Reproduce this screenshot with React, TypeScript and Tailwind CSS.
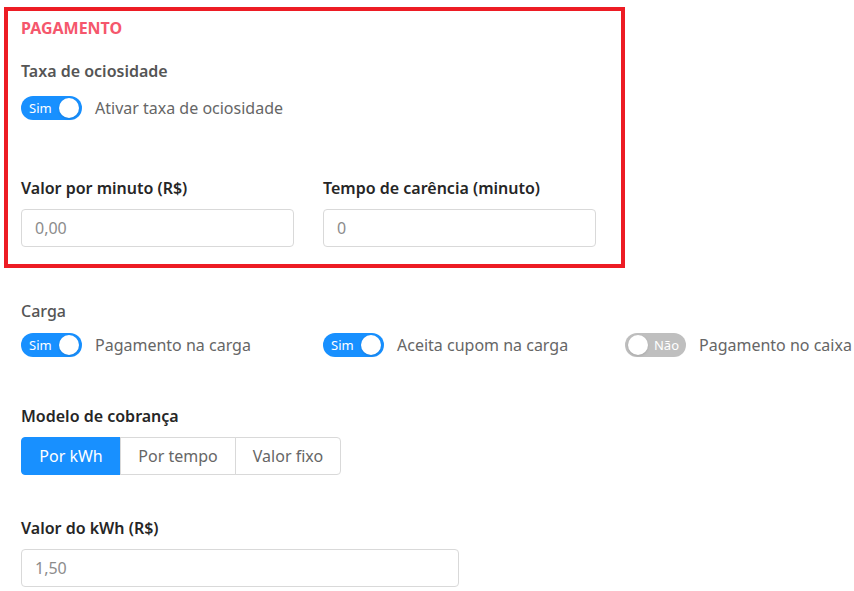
import { useState } from 'react';

const font = { fontFamily: '"Noto Sans", "Open Sans", sans-serif' };

const Toggle = ({ on, label }: { on: boolean; label: string }) => {
	return (
		<div className="flex items-center gap-[13px]">
			<div
				className={`relative flex items-center h-[24px] w-[61px] shrink-0 rounded-full ${on ? 'bg-[#1890ff]' : 'bg-[#bfbfbf]'}`}
			>
				{on ? (
					<>
						<span className="pl-[8px] text-[13px] text-white leading-none">Sim</span>
						<span className="absolute right-[3px] top-[2px] h-[20px] w-[20px] rounded-full bg-white shadow-sm" />
					</>
				) : (
					<>
						<span className="absolute left-[3px] top-[2px] h-[20px] w-[20px] rounded-full bg-white shadow-sm" />
						<span className="ml-auto pr-[7px] text-[13px] text-white leading-none">Não</span>
					</>
				)}
			</div>
			<span className="text-[16px] text-[#666] whitespace-nowrap">{label}</span>
		</div>
	);
};

const Field = ({ label, value }: { label: string; value: string }) => {
	return (
		<div>
			<div className="text-[16px] font-semibold text-[#262626] leading-[22px]">{label}</div>
			<div className="mt-[10px] h-[38px] rounded-[4px] border border-[#d9d9d9] bg-white px-[13px] flex items-center text-[16px] text-[#8c8c8c]">
				{value}
			</div>
		</div>
	);
};

export default function App() {
	const [mode, setMode] = useState('kwh');
	const modes = [
		{ id: 'kwh', name: 'Por kWh', w: 'w-[100px]' },
		{ id: 'tempo', name: 'Por tempo', w: 'w-[116px]' },
		{ id: 'fixo', name: 'Valor fixo', w: 'w-[106px]' },
	];

	return (
		<div className="min-h-screen w-[854px] overflow-hidden bg-white" style={font}>
			<div className="pt-[7px] pl-[4px]">
				<div className="w-[621px] h-[261px] border-[4px] border-[#ed1c24] pl-[13px] pt-[6px]">
					<div className="text-[16px] font-bold text-[#f5576c] leading-[22px]">PAGAMENTO</div>
					<div className="mt-[21px] text-[16px] font-semibold text-[#555] leading-[22px]">Taxa de ociosidade</div>
					<div className="mt-[14px]">
						<Toggle on label="Ativar taxa de ociosidade" />
					</div>
					<div className="mt-[57px] grid grid-cols-[273px_273px] gap-x-[29px]">
						<Field label="Valor por minuto (R$)" value="0,00" />
						<Field label="Tempo de carência (minuto)" value="0" />
					</div>
				</div>
			</div>

			<div className="pl-[21px]">
				<div className="mt-[32px] text-[16px] font-medium text-[#555] leading-[22px]">Carga</div>
				<div className="mt-[11px] grid grid-cols-[273px_273px_auto] gap-x-[29px]">
					<Toggle on label="Pagamento na carga" />
					<Toggle on label="Aceita cupom na carga" />
					<Toggle on={false} label="Pagamento no caixa" />
				</div>

				<div className="mt-[48px] text-[16px] font-semibold text-[#262626] leading-[22px]">Modelo de cobrança</div>
				<div className="mt-[10px] flex">
					{modes.map((m, i) => (
						<button
							key={m.id}
							onClick={() => setMode(m.id)}
							className={`h-[38px] ${m.w} text-[16px] border ${
								mode === m.id
									? 'bg-[#1890ff] border-[#1890ff] text-white'
									: 'bg-white border-[#d9d9d9] text-[#666]'
							} ${i === 0 ? 'rounded-l-[4px]' : '-ml-px'} ${i === modes.length - 1 ? 'rounded-r-[4px]' : ''}`}
						>
							{m.name}
						</button>
					))}
				</div>

				<div className="mt-[42px] w-[438px]">
					<Field label="Valor do kWh (R$)" value="1,50" />
				</div>
			</div>
		</div>
	);
}
